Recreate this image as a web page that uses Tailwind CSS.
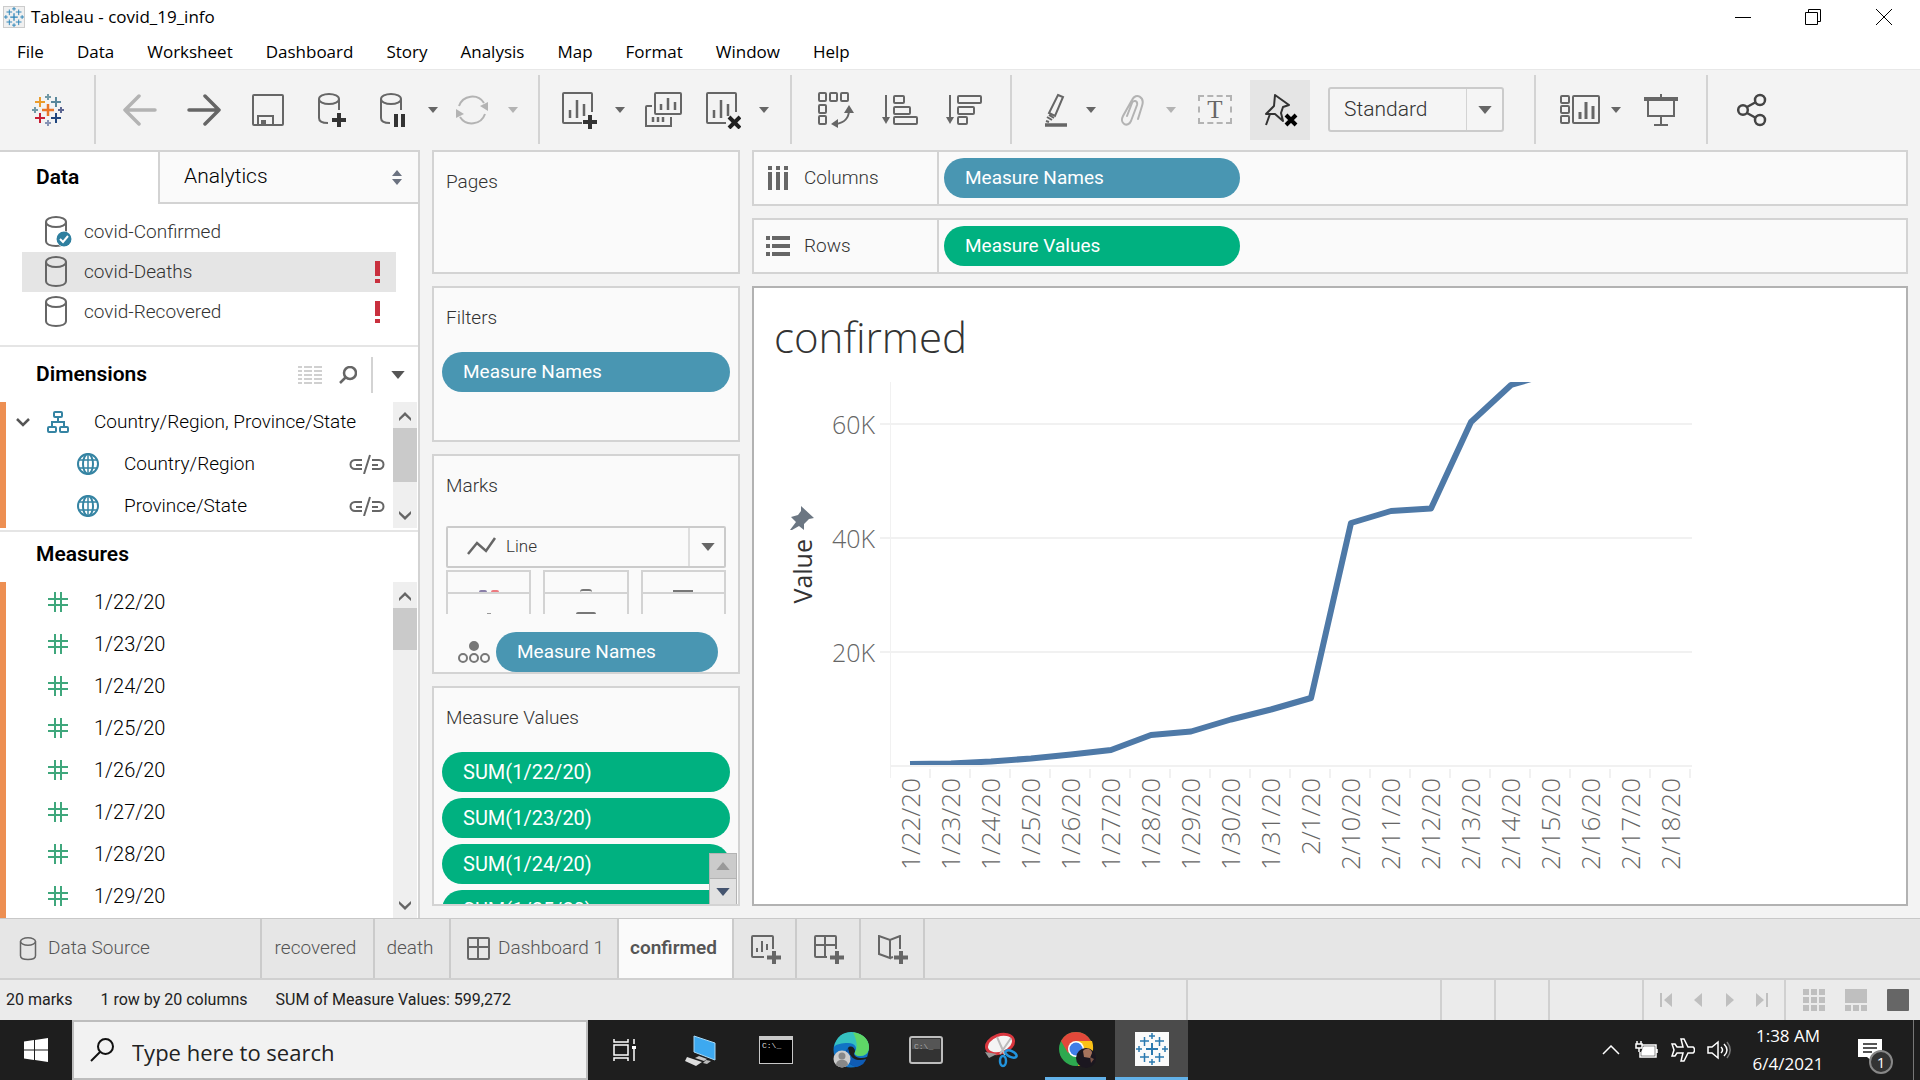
<!DOCTYPE html>
<html lang="en">
<head>
<meta charset="utf-8">
<meta name="viewport" content="width=device-width, initial-scale=1">
<title>Tableau - covid_19_info</title>
<script src="https://cdn.jsdelivr.net/npm/@tailwindcss/browser@4"></script>
</head>
<body class="h-screen min-h-[1080px] w-full flex flex-col overflow-hidden bg-white text-[19px] text-[#333] font-[Roboto,'Liberation_Sans',sans-serif]">

<!-- Shared icon symbols -->
<svg class="hidden" aria-hidden="true">
  <symbol id="db" viewBox="0 0 24 32"><g fill="none" stroke="#666" stroke-width="2"><ellipse cx="12" cy="6" rx="10" ry="5"/><path d="M2 6v19c0 3 4 5 10 5s10-2 10-5V6"/></g></symbol>
  <symbol id="caret" viewBox="0 0 10 6"><path d="M0 0h10L5 6z" fill="currentColor"/></symbol>
  <symbol id="up" viewBox="0 0 12 10"><path d="M0 9V6l6-6 6 6v3L6 3.500z" fill="#666"/></symbol>
  <symbol id="down" viewBox="0 0 12 10"><path d="M0 1v3l6 6 6-6V1L6 6.500z" fill="#666"/></symbol>
  <symbol id="hash" viewBox="0 0 20 20"><path d="M7 0v20M13 0v20M0 7h20M0 13h20" stroke="#3fa77c" stroke-width="2" fill="none"/></symbol>
  <symbol id="globe" viewBox="0 0 24 24"><g fill="none" stroke="#3584a3" stroke-width="2"><circle cx="12" cy="12" r="10"/><ellipse cx="12" cy="12" rx="5" ry="10"/><path d="M3 8h18M3 16h18M12 2v20" stroke-width="1.500"/></g></symbol>
  <symbol id="link" viewBox="0 0 36 20"><g fill="none" stroke="#666" stroke-width="2"><path d="M13 6H6a4.500 4.500 0 0 0 0 9h7M7 11h6M23 6h7a4.500 4.500 0 0 1 0 9h-7M23 11h6M21 1l-6 19"/></g></symbol>
  <symbol id="chart" viewBox="0 0 36 38"><g fill="none" stroke="#666" stroke-width="2"><path d="M21 32H3a1 1 0 0 1-1-1V3a1 1 0 0 1 1-1h27a1 1 0 0 1 1 1v18"/><path d="M9 27v-8M16 27V9M23 25V13" stroke-width="2.500"/></g></symbol>
  <symbol id="marks" viewBox="0 0 32 32"><g fill="none" stroke-width="2"><path d="M10 16h12M16 10v12" /><path d="M4 8h9M8.500 4v9M19 8h9M23.500 4v9M4 24h9M8.500 20v9M19 24h9M23.500 20v9M13 3h6M16 0v6M13 29h6M16 26v6M0 16h6M3 13v6M26 16h6M29 13v6" stroke-width="1.500"/></g></symbol>
</svg>

<!-- Title bar -->
<header class="h-[34px] shrink-0 flex items-center justify-between font-['Open_Sans','Noto_Sans',sans-serif] text-black">
  <div class="flex items-center pl-[3px] gap-[6px]">
    <svg class="size-[22px] bg-[#f0f0f0] border border-[#ccc]" stroke="#2a83b8"><use href="#marks"/></svg>
    <h1 class="text-[17px]">Tableau - covid_19_info</h1>
  </div>
  <div class="flex">
    <button aria-label="Minimize" class="w-[70px] h-[34px] grid place-items-center"><svg class="w-4 h-4" stroke="#000"><path d="M0 8.500h16"/></svg></button>
    <button aria-label="Restore" class="w-[70px] h-[34px] grid place-items-center"><svg class="w-4 h-4" stroke="#000" fill="none"><path d="M.5 3.500h12v12H.5zM3.500 3V.5h12v12H13"/></svg></button>
    <button aria-label="Close" class="w-[72px] h-[34px] grid place-items-center"><svg class="w-4 h-4" stroke="#000"><path d="M0 0l16 16M16 0L0 16"/></svg></button>
  </div>
</header>

<!-- Menu bar -->
<nav class="h-[35px] shrink-0 flex gap-[33px] pl-[17px] items-center font-['Open_Sans','Noto_Sans',sans-serif] text-[17px] text-black">
  <a href="#">File</a><a href="#">Data</a><a href="#">Worksheet</a><a href="#">Dashboard</a><a href="#">Story</a><a href="#">Analysis</a><a href="#">Map</a><a href="#">Format</a><a href="#">Window</a><a href="#">Help</a>
</nav>

<!-- Toolbar -->
<div class="h-[81px] shrink-0 flex bg-[#f3f3f3] border-t border-[#e8e8e8] pt-[5px] pb-[6px] text-[#666]">
  <button aria-label="Start page" class="w-[94px] pl-[2px] grid place-items-center">
    <svg class="size-8" viewBox="0 0 32 32" fill="none" stroke-width="2"><path d="M10 16h12M16 10v12" stroke="#e97627" stroke-width="2.500"/><path d="M3 8h10M8 3v10" stroke="#eb9c2b"/><path d="M19 8h10M24 3v10" stroke="#59879b"/><path d="M3 24h10M8 19v10" stroke="#c72035"/><path d="M19 24h10M24 19v10" stroke="#1f457e"/><path d="M13 3h6M16 0v6M0 16h6M3 13v6" stroke="#7199a6"/><path d="M26 16h6M29 13v6" stroke="#5b6591"/><path d="M13 29h6M16 26v6" stroke="#8693b5"/></svg>
  </button>
  <div class="flex border-l-2 border-[#d3d3d3] pl-3 pr-[10px]">
    <button aria-label="Undo" class="w-16 grid place-items-center"><svg class="w-[34px] h-8" viewBox="0 0 34 32" fill="none" stroke="#b3b3b3" stroke-width="3.500" stroke-linecap="round" stroke-linejoin="round"><path d="M32 16H2M16 2L2 16l14 14"/></svg></button>
    <button aria-label="Redo" class="w-16 grid place-items-center"><svg class="w-[34px] h-8" viewBox="0 0 34 32" fill="none" stroke="#666" stroke-width="3.500" stroke-linecap="round" stroke-linejoin="round"><path d="M2 16h30M18 2l14 14-14 14"/></svg></button>
    <button aria-label="Save" class="w-16 grid place-items-center"><svg class="size-8" viewBox="0 0 32 32" fill="none" stroke="#666" stroke-width="2"><rect x="1" y="1" width="30" height="30" rx="1"/><path d="M6 31v-9h15v9"/><path d="M9 26h5v5H9z" fill="#666" stroke="none"/></svg></button>
    <button aria-label="New data source" class="w-16 grid place-items-center"><svg class="w-[30px] h-9" viewBox="0 0 30 36" fill="none" stroke="#666" stroke-width="2"><ellipse cx="12" cy="7" rx="10" ry="5"/><path d="M2 7v19c0 3 3 5 9 5M22 7v11"/><path d="M22 21v14M15 28h14" stroke="#333" stroke-width="4"/></svg></button>
    <button aria-label="Pause auto updates" class="w-[56px] grid place-items-center"><svg class="w-[26px] h-9" viewBox="0 0 26 36" fill="none" stroke="#666" stroke-width="2"><ellipse cx="12" cy="7" rx="10" ry="5"/><path d="M2 7v19c0 3 3 5 9 5M22 7v11"/><path d="M17 22v13M24 22v13" stroke="#333" stroke-width="4"/></svg></button>
    <button aria-label="Auto update options" class="w-[26px] grid place-items-center"><svg class="w-[10px] h-[6px]"><use href="#caret"/></svg></button>
    <button aria-label="Run update" class="w-[52px] grid place-items-center"><svg class="w-[34px] h-8" viewBox="0 0 34 32" fill="none" stroke="#b3b3b3" stroke-width="2"><path d="M4 12A14 14 0 0 1 29 9M30 20A14 14 0 0 1 5 23"/><path d="M33 8v9l-8-5zM1 24v-9l8 5z" fill="#b3b3b3" stroke="none"/></svg></button>
    <button aria-label="Update options" class="w-[30px] grid place-items-center text-[#b3b3b3]"><svg class="w-[10px] h-[6px]"><use href="#caret"/></svg></button>
  </div>
  <div class="flex border-l-2 border-[#d3d3d3] pl-[7px] pr-[11px]">
    <button aria-label="New worksheet" class="w-16 grid place-items-center"><svg class="w-9 h-[38px]" viewBox="0 0 36 38"><use href="#chart"/><path d="M29 24v14M22 31h14" stroke="#333" stroke-width="4"/></svg></button>
    <button aria-label="New worksheet options" class="w-[18px] grid place-items-center"><svg class="w-[10px] h-[6px]"><use href="#caret"/></svg></button>
    <button aria-label="Duplicate" class="w-[68px] grid place-items-center"><svg class="w-[38px] h-9" viewBox="0 0 38 36" fill="none" stroke="#666" stroke-width="2"><rect x="11" y="1" width="26" height="21" rx="1"/><path d="M8 14H3a1 1 0 0 0-1 1v19h25v-9"/><path d="M17 18v-6M24 18V6M31 18v-8M9 30v-5M14 30v-5M19 30v-5" stroke-width="2.500"/></svg></button>
    <button aria-label="Clear sheet" class="w-[52px] grid place-items-center"><svg class="w-9 h-[38px]" viewBox="0 0 36 38"><use href="#chart"/><path d="M24 26l11 11M35 26L24 37" stroke="#222" stroke-width="4"/></svg></button>
    <button aria-label="Clear options" class="w-[30px] grid place-items-center"><svg class="w-[10px] h-[6px]"><use href="#caret"/></svg></button>
  </div>
  <div class="flex border-l-2 border-[#d3d3d3] pl-3 pr-[14px]">
    <button aria-label="Swap rows and columns" class="w-16 grid place-items-center"><svg class="w-9 h-[36px]" viewBox="0 0 36 36" fill="none" stroke="#666" stroke-width="2"><rect x="1" y="1" width="7" height="8" rx="1"/><rect x="12" y="1" width="7" height="8" rx="1"/><rect x="23" y="1" width="7" height="8" rx="1"/><rect x="1" y="13" width="7" height="8" rx="1"/><rect x="1" y="24" width="7" height="8" rx="1"/><path d="M31 18c0 8-5 13-13 14"/><path d="M31 13l5 8h-10zM13 32l7-5v9z" fill="#666" stroke="none"/></svg></button>
    <button aria-label="Sort ascending" class="w-16 grid place-items-center"><svg class="w-9 h-[30px]" viewBox="0 0 36 30" fill="none" stroke="#666" stroke-width="2"><path d="M4 0v25"/><path d="M0 22h8l-4 7z" fill="#666" stroke="none"/><rect x="12" y="1" width="10" height="7" rx="1"/><rect x="12" y="12" width="16" height="7" rx="1"/><rect x="12" y="22" width="23" height="7" rx="1"/></svg></button>
    <button aria-label="Sort descending" class="w-16 grid place-items-center"><svg class="w-9 h-[30px]" viewBox="0 0 36 30" fill="none" stroke="#666" stroke-width="2"><path d="M4 0v25"/><path d="M0 22h8l-4 7z" fill="#666" stroke="none"/><rect x="12" y="1" width="23" height="7" rx="1"/><rect x="12" y="12" width="16" height="7" rx="1"/><rect x="12" y="22" width="9" height="7" rx="1"/></svg></button>
  </div>
  <div class="flex items-stretch border-l-2 border-[#d3d3d3] pl-5 pr-[30px]">
    <button aria-label="Highlight" class="w-12 grid place-items-center"><svg class="w-6 h-[34px]" viewBox="0 0 24 34" fill="none" stroke="#666" stroke-width="2"><path d="M14 2l5 2-8 19-6-3zM5 22l5 3M3 24l5 3M2 28l3 1"/><path d="M1 32h22" stroke-width="3.500"/></svg></button>
    <button aria-label="Highlight options" class="w-[22px] grid place-items-center"><svg class="w-[10px] h-[6px]"><use href="#caret"/></svg></button>
    <button aria-label="Group members" class="w-[60px] grid place-items-center"><svg class="w-6 h-8" viewBox="0 0 24 32" fill="none" stroke="#b3b3b3" stroke-width="2" stroke-linecap="round"><path d="M18 25l4-13c3-9-6-14-10-6L3 22c-4 8 5 12 8 5l6-16c1-5-4-5-5-2L7 22"/></svg></button>
    <button aria-label="Group options" class="w-[18px] grid place-items-center text-[#b3b3b3]"><svg class="w-[10px] h-[6px]"><use href="#caret"/></svg></button>
    <button aria-label="Show mark labels" class="w-[70px] grid place-items-center"><span class="w-[34px] h-[29px] grid place-items-center border-2 border-dashed border-[#b3b3b3] font-['Liberation_Serif',serif] text-[25px] leading-none">T</span></button>
    <button aria-label="Fix axes" class="w-[60px] h-[60px] self-center grid place-items-center bg-[#e5e5e5]"><svg class="w-[36px] h-[34px]" viewBox="0 0 36 34" fill="none" stroke="#333" stroke-width="2" stroke-linejoin="round"><path d="M13 2l14 10-6 2-2 6 2 8-8-7H4l8-8zM8 21L4 32"/><path d="M24 22l10 10M34 22L24 32" stroke="#000" stroke-width="4"/></svg></button>
    <div class="relative ml-[18px] w-[176px] h-[45px] self-center">
      <select id="fit" aria-label="Fit" class="appearance-none w-full h-full rounded-[3px] border-2 border-[#cbcbcb] bg-[#f5f5f5] pl-[14px] text-[21px] font-light text-[#333]"><option>Standard</option></select>
      <span class="pointer-events-none absolute right-[1px] top-0.5 bottom-0.5 w-[37px] border-l border-[#d3d3d3] grid place-items-center"><svg class="w-[14px] h-[8px]"><use href="#caret"/></svg></span>
    </div>
  </div>
  <div class="flex border-l-2 border-[#d3d3d3] pl-4 pr-2">
    <button aria-label="Show or hide cards" class="w-[56px] grid place-items-center"><svg class="w-10 h-[30px]" viewBox="0 0 40 30" fill="none" stroke="#666" stroke-width="2"><rect x="1" y="1" width="8" height="7" rx="1"/><rect x="1" y="11" width="8" height="7" rx="1"/><rect x="1" y="21" width="8" height="7" rx="1"/><rect x="13" y="1" width="26" height="27" rx="1"/><path d="M20 24v-7M26 24V7M33 24V11" stroke-width="3"/></svg></button>
    <button aria-label="Card options" class="w-4 grid place-items-center"><svg class="w-[10px] h-[6px]"><use href="#caret"/></svg></button>
    <button aria-label="Presentation mode" class="w-[74px] grid place-items-center"><svg class="w-[34px] h-8" viewBox="0 0 34 32" fill="none" stroke="#666" stroke-width="2"><path d="M17 0v4M4 6v16h26V6M17 22v8"/><path d="M0 5h34" stroke-width="4"/><path d="M10 31h14"/></svg></button>
  </div>
  <div class="flex border-l-2 border-[#d3d3d3] pl-3">
    <button aria-label="Share" class="w-16 grid place-items-center"><svg class="w-[30px] h-[34px]" viewBox="0 0 30 34" fill="none" stroke="#444" stroke-width="2.500"><circle cx="6" cy="17" r="4.800"/><circle cx="23" cy="7" r="5"/><circle cx="23" cy="27" r="5"/><path d="M10 14l9-5M10 20l9 5"/></svg></button>
  </div>
</div>

<!-- Workspace -->
<main class="flex-1 min-h-0 flex bg-[#f3f3f3]">

  <!-- Data pane -->
  <aside class="w-[420px] shrink-0 flex flex-col bg-white border-r-2 border-t-2 border-[#d3d3d3]">
    <div class="h-[52px] shrink-0 flex text-[21px]">
      <button class="w-[158px] text-left pl-9 font-semibold text-black">Data</button>
      <button class="flex-1 flex items-center justify-between bg-[#fafafa] border-l-2 border-b-2 border-[#d3d3d3] pl-6 pr-4 font-light text-black">Analytics
        <svg class="w-[10px] h-[15px]" viewBox="0 0 10 15" fill="#6b7280"><path d="M0 6l5-6 5 6zM0 9l5 6 5-6z"/></svg></button>
    </div>
    <ul class="h-[143px] shrink-0 pt-2 pl-[22px] pr-[22px] border-b-2 border-[#e5e5e5] font-light">
      <li class="h-10 flex items-center pl-[22px] gap-4">
        <span class="relative"><svg class="w-6 h-8"><use href="#db"/></svg><svg class="absolute left-[12px] top-[15px] size-4 bg-white rounded-full" viewBox="0 0 16 16"><circle cx="8" cy="8" r="7.500" fill="#2e7f9f"/><path d="M4 8l3 3 5-6" fill="none" stroke="#fff" stroke-width="2"/></svg></span>
        covid-Confirmed</li>
      <li class="h-10 flex items-center pl-[22px] pr-4 gap-4 bg-[#e5e5e5]"><svg class="w-6 h-8"><use href="#db"/></svg>covid-Deaths
        <svg class="ml-auto w-[5px] h-[22px]" fill="#c9303e"><path d="M0 0h5v15H0zM0 18h5v4H0z"/></svg></li>
      <li class="h-10 flex items-center pl-[22px] pr-4 gap-4"><svg class="w-6 h-8"><use href="#db"/></svg>covid-Recovered
        <svg class="ml-auto w-[5px] h-[22px]" fill="#c9303e"><path d="M0 0h5v15H0zM0 18h5v4H0z"/></svg></li>
    </ul>
    <div class="h-[55px] shrink-0 flex items-center pl-9 pr-[13px]">
      <h2 class="font-semibold text-[21px] text-black">Dimensions</h2>
      <div class="ml-auto flex items-center">
        <button aria-label="View data"><svg class="w-6 h-[18px]" stroke="#d0d0d0" stroke-width="2" stroke-dasharray="4 2 8 2 8 9"><path d="M0 1h24M0 5h24M0 9h24M0 13h24M0 17h24"/></svg></button>
        <button aria-label="Find field" class="ml-[17px]"><svg class="w-[18px] h-[18px]" fill="none" stroke="#666" stroke-width="2.500"><circle cx="11" cy="7" r="6"/><path d="M7 11l-6 6"/></svg></button>
        <button aria-label="Field options" class="ml-[14px] h-9 border-l-2 border-[#d3d3d3] pl-[18px] text-[#555]"><svg class="w-[14px] h-2"><use href="#caret"/></svg></button>
      </div>
    </div>
    <div class="h-[126px] shrink-0 flex border-l-[6px] border-[#ed8f52] pr-px">
      <ul class="flex-1 font-light text-black">
        <li class="h-[42px] flex items-center pl-[10px] pb-[2px]"><svg class="w-[14px] h-[10px]" fill="none" stroke="#555" stroke-width="2.500"><path d="M1 2l6 6 6-6"/></svg>
          <svg class="ml-[17px] w-[22px] h-[22px]" fill="none" stroke="#3584a3" stroke-width="2"><rect x="7" y="1" width="8" height="5" rx="1"/><rect x="1" y="16" width="8" height="5" rx="1"/><rect x="13" y="16" width="8" height="5" rx="1"/><path d="M11 6v5M5 16v-5h12v5"/></svg>
          <span class="ml-[25px]">Country/Region, Province/State</span></li>
        <li class="h-[42px] flex items-center pl-[70px] pr-2 pb-[2px]"><svg class="w-6 h-6"><use href="#globe"/></svg><span class="ml-6">Country/Region</span><svg class="ml-auto w-9 h-5"><use href="#link"/></svg></li>
        <li class="h-[42px] flex items-center pl-[70px] pr-2 pb-[2px]"><svg class="w-6 h-6"><use href="#globe"/></svg><span class="ml-6">Province/State</span><svg class="ml-auto w-9 h-5"><use href="#link"/></svg></li>
      </ul>
      <div class="w-6 bg-[#efefef] flex flex-col items-center pt-2 pb-2"><svg class="w-3 h-[10px] shrink-0 mt-[2px]"><use href="#up"/></svg><div class="mt-[6px] w-full h-[54px] bg-[#cacaca]"></div><svg class="mt-auto w-3 h-[10px] shrink-0"><use href="#down"/></svg></div>
    </div>
    <div class="mt-[2px] h-[52px] shrink-0 flex items-center pl-9 pb-1 border-t-2 border-[#e5e5e5]"><h2 class="font-semibold text-[21px] text-black">Measures</h2></div>
    <div class="flex-1 min-h-0 flex border-l-[6px] border-[#ed8f52] pr-px overflow-hidden">
      <ul class="flex-1 font-light text-[20px] text-black">
        <li class="h-[42px] flex items-center pl-[42px] pb-[2px] gap-[26px]"><svg class="size-5"><use href="#hash"/></svg>1/22/20</li>
        <li class="h-[42px] flex items-center pl-[42px] pb-[2px] gap-[26px]"><svg class="size-5"><use href="#hash"/></svg>1/23/20</li>
        <li class="h-[42px] flex items-center pl-[42px] pb-[2px] gap-[26px]"><svg class="size-5"><use href="#hash"/></svg>1/24/20</li>
        <li class="h-[42px] flex items-center pl-[42px] pb-[2px] gap-[26px]"><svg class="size-5"><use href="#hash"/></svg>1/25/20</li>
        <li class="h-[42px] flex items-center pl-[42px] pb-[2px] gap-[26px]"><svg class="size-5"><use href="#hash"/></svg>1/26/20</li>
        <li class="h-[42px] flex items-center pl-[42px] pb-[2px] gap-[26px]"><svg class="size-5"><use href="#hash"/></svg>1/27/20</li>
        <li class="h-[42px] flex items-center pl-[42px] pb-[2px] gap-[26px]"><svg class="size-5"><use href="#hash"/></svg>1/28/20</li>
        <li class="h-[42px] flex items-center pl-[42px] pb-[2px] gap-[26px]"><svg class="size-5"><use href="#hash"/></svg>1/29/20</li>
      </ul>
      <div class="w-6 bg-[#efefef] flex flex-col items-center pt-2 pb-2"><svg class="w-3 h-[10px] shrink-0 mt-[2px]"><use href="#up"/></svg><div class="mt-[6px] w-full h-[42px] bg-[#cacaca]"></div><svg class="mt-auto w-3 h-[10px] shrink-0"><use href="#down"/></svg></div>
    </div>
  </aside>

  <!-- Cards -->
  <section class="w-[308px] shrink-0 ml-3 mb-3 flex flex-col gap-3 font-light">
    <div class="h-[124px] shrink-0 border-2 border-[#d3d3d3] bg-[#fafafa] pt-4 pl-3"><h3 class="leading-[28px]">Pages</h3></div>
    <div class="h-[156px] shrink-0 border-2 border-[#d3d3d3] bg-[#fafafa] pt-4 px-2">
      <h3 class="leading-[28px] pl-1">Filters</h3>
      <button class="mt-5 w-full h-10 rounded-full bg-[#4996b2] text-white font-normal text-left pl-[21px]">Measure Names</button>
    </div>
    <div class="h-[220px] shrink-0 border-2 border-[#d3d3d3] bg-[#fafafa] pt-4 px-3 flex flex-col">
      <h3 class="leading-[28px]">Marks</h3>
      <div class="relative mt-[26px] h-[42px]">
        <select id="mark" aria-label="Mark type" class="appearance-none w-full h-full rounded-[2px] border-2 border-[#cbcbcb] bg-[#fafafa] pl-[58px] text-[17px]"><option>Line</option></select>
        <svg class="pointer-events-none absolute left-[21px] top-[11px] w-[30px] h-[18px]" fill="none" stroke="#666" stroke-width="2.500"><path d="M1 17l9-11 9 8L28 1"/></svg>
        <span class="pointer-events-none absolute right-0 top-0.5 bottom-0.5 w-[38px] border-l-2 border-[#dedede] grid place-items-center text-[#666]"><svg class="w-[14px] h-2"><use href="#caret"/></svg></span>
      </div>
      <div class="mt-0.5 grid grid-cols-3 gap-x-3">
        <button aria-label="Color" class="h-[22px] border-2 border-b-0 border-[#d3d3d3] flex justify-center items-end gap-1"><span class="w-2 h-[2px] rounded-t-full bg-[#8a7fa8]"></span><span class="w-2 h-[2px] rounded-t-full bg-[#ed7a80]"></span></button>
        <button aria-label="Size" class="h-[22px] border-2 border-b-0 border-[#d3d3d3] flex justify-center items-end"><span class="w-3 h-[3px] rounded-t-full border-t-2 border-[#777]"></span></button>
        <button aria-label="Label" class="h-[22px] border-2 border-b-0 border-[#d3d3d3] flex justify-center items-end"><span class="w-5 h-[2px] bg-[#777]"></span></button>
        <button aria-label="Detail" class="h-[22px] border-2 border-b-0 border-[#d3d3d3] flex justify-center items-end"><span class="w-1 h-px bg-[#999]"></span></button>
        <button aria-label="Tooltip" class="h-[22px] border-2 border-b-0 border-[#d3d3d3] flex justify-center items-end"><span class="w-5 h-[2px] rounded-t-sm bg-[#777]"></span></button>
        <button aria-label="Path" class="h-[22px] border-2 border-b-0 border-[#d3d3d3]"></button>
      </div>
      <div class="mt-auto flex items-center pl-3 pr-2">
        <svg class="w-8 h-6" fill="none" stroke="#777" stroke-width="2"><circle cx="16" cy="6" r="4" fill="#777"/><circle cx="5" cy="18" r="4"/><circle cx="16" cy="18" r="4"/><circle cx="27" cy="18" r="4"/></svg>
        <button class="ml-[6px] flex-1 h-10 rounded-full bg-[#4996b2] text-white font-normal text-left pl-[21px]">Measure Names</button>
      </div>
    </div>
    <div class="relative flex-1 min-h-0 border-2 border-[#d3d3d3] bg-[#fafafa] pt-4 px-2 overflow-hidden">
      <h3 class="leading-[28px] pl-1">Measure Values</h3>
      <div class="mt-5 flex flex-col gap-[6px] text-[20px] text-white font-normal">
        <button class="h-10 shrink-0 rounded-full bg-[#00b180] text-left pl-[21px]">SUM(1/22/20)</button>
        <button class="h-10 shrink-0 rounded-full bg-[#00b180] text-left pl-[21px]">SUM(1/23/20)</button>
        <button class="h-10 shrink-0 rounded-full bg-[#00b180] text-left pl-[21px]">SUM(1/24/20)</button>
        <button class="h-10 shrink-0 rounded-full bg-[#00b180] text-left pl-[21px]">SUM(1/25/20)</button>
      </div>
      <div class="absolute right-[1px] bottom-0 w-7 border border-[#b3b3b3] border-b-0">
        <button aria-label="Scroll up" class="w-full h-6 bg-[#cbcbcb] grid place-items-center text-[#999]"><svg class="w-[14px] h-2 rotate-180"><use href="#caret"/></svg></button>
        <button aria-label="Scroll down" class="w-full h-[26px] bg-[#e1e1e1] border-t border-[#b3b3b3] grid place-items-center text-[#44546f]"><svg class="w-[14px] h-2"><use href="#caret"/></svg></button>
      </div>
    </div>
  </section>

  <!-- Shelves and view -->
  <section class="flex-1 min-w-0 ml-3 mr-3 mb-3 flex flex-col gap-3">
    <div class="h-14 shrink-0 flex border-2 border-[#d3d3d3] bg-[#fafafa]">
      <h3 class="w-[185px] border-r-2 border-[#d3d3d3] flex items-center pl-[14px] gap-[14px] font-light"><svg class="w-[22px] h-6" fill="#666"><path d="M0 0h4v4H0zM8 0h4v4H8zM16 0h4v4h-4zM0 6h4v18H0zM8 6h4v18H8zM16 6h4v18h-4z"/></svg>Columns</h3>
      <button class="ml-[5px] mt-[6px] w-[296px] h-10 rounded-full bg-[#4996b2] text-white text-left pl-[21px]">Measure Names</button>
    </div>
    <div class="h-14 shrink-0 flex border-2 border-[#d3d3d3] bg-[#fafafa]">
      <h3 class="w-[185px] border-r-2 border-[#d3d3d3] flex items-center pl-3 gap-[14px] font-light"><svg class="w-6 h-5" fill="#666"><path d="M0 0h4v4H0zM6 0h18v4H6zM0 8h4v4H0zM6 8h18v4H6zM0 16h4v4H0zM6 16h18v4H6z"/></svg>Rows</h3>
      <button class="ml-[5px] mt-[6px] w-[296px] h-10 rounded-full bg-[#00b180] text-white text-left pl-[21px]">Measure Values</button>
    </div>
    <article class="flex-1 min-h-0 bg-white border-2 border-[#b2b2b2] overflow-hidden font-['Open_Sans','Noto_Sans',sans-serif]">
      <h2 class="pl-5 pt-[22px] h-[94px] text-[42px] leading-[54px] font-light text-[#333]">confirmed</h2>
      <div class="flex">
        <div class="w-[60px] h-[384px] flex flex-col items-center pt-[124px] pl-[36px] shrink-0">
          <svg class="w-6 h-6 shrink-0" viewBox="0 0 24 24" fill="#6b7682"><path d="M11 0l13 12-5 1-5 5 0 6-5-4-7 4-2 0 6-8-5-5 7-2 3-4z"/></svg>
          <div class="mt-[9px] [writing-mode:vertical-rl] rotate-180 text-[25px] leading-6 font-medium text-[#333]">Value</div>
        </div>
        <div class="w-[61px] mr-px h-[384px] shrink-0 text-right text-[25px] leading-[30px] font-light text-[#666] pt-[27px] flex flex-col gap-[84px]"><span>60K</span><span>40K</span><span>20K</span></div>
        <div class="w-[816px] shrink-0">
          <svg class="block w-full h-[396px]" viewBox="0 0 816 396" fill="none">
            <path d="M4 42h812M4 156h812M4 270h812M14 384h802" stroke="#f1f1f1" stroke-width="2"/>
            <path d="M14.500 0v396" stroke="#f1f1f1"/>
            <path d="M54 387v9M94 387v9M134 387v9M174 387v9M214 387v9M254 387v9M294 387v9M334 387v9M374 387v9M414 387v9M454 387v9M494 387v9M534 387v9M574 387v9M614 387v9M654 387v9M694 387v9M734 387v9M774 387v9M814 387v9" stroke="#f1f1f1" stroke-width="2"/>
            <svg x="0" y="0" width="816" height="383" viewBox="0 0 816 383"><path d="M34 382l41-.5 40-2 40-3 40-4 40-4.500 40-15 40-3.500 40-12 40-10 40-11.500L475 141l40-12 40-2.500L595 40l40-37 40-12" stroke="#4e79a7" stroke-width="6" stroke-linejoin="round"/></svg>
          </svg>
          <div class="ml-[14px] w-[800px] grid grid-cols-20 justify-items-center text-[26px] leading-[30px] font-light text-[#666]">
            <span class="[writing-mode:vertical-rl] rotate-180 text-right">1/22/20</span><span class="[writing-mode:vertical-rl] rotate-180 text-right">1/23/20</span><span class="[writing-mode:vertical-rl] rotate-180 text-right">1/24/20</span><span class="[writing-mode:vertical-rl] rotate-180 text-right">1/25/20</span><span class="[writing-mode:vertical-rl] rotate-180 text-right">1/26/20</span><span class="[writing-mode:vertical-rl] rotate-180 text-right">1/27/20</span><span class="[writing-mode:vertical-rl] rotate-180 text-right">1/28/20</span><span class="[writing-mode:vertical-rl] rotate-180 text-right">1/29/20</span><span class="[writing-mode:vertical-rl] rotate-180 text-right">1/30/20</span><span class="[writing-mode:vertical-rl] rotate-180 text-right">1/31/20</span><span class="[writing-mode:vertical-rl] rotate-180 text-right">2/1/20</span><span class="[writing-mode:vertical-rl] rotate-180 text-right">2/10/20</span><span class="[writing-mode:vertical-rl] rotate-180 text-right">2/11/20</span><span class="[writing-mode:vertical-rl] rotate-180 text-right">2/12/20</span><span class="[writing-mode:vertical-rl] rotate-180 text-right">2/13/20</span><span class="[writing-mode:vertical-rl] rotate-180 text-right">2/14/20</span><span class="[writing-mode:vertical-rl] rotate-180 text-right">2/15/20</span><span class="[writing-mode:vertical-rl] rotate-180 text-right">2/16/20</span><span class="[writing-mode:vertical-rl] rotate-180 text-right">2/17/20</span><span class="[writing-mode:vertical-rl] rotate-180 text-right">2/18/20</span>
          </div>
        </div>
      </div>
    </article>
  </section>
</main>

<!-- Sheet tabs -->
<div class="h-[62px] shrink-0 flex bg-[#e6e6e6] border-t border-b-2 border-t-[#c8c8c8] border-b-[#d0d0d0] text-[19px] font-light text-[#555]">
  <button class="w-[262px] flex items-center gap-[10px] pl-[18px] border-r-2 border-[#cbcbcb]"><svg class="w-5 h-6"><use href="#db"/></svg>Data Source</button>
  <button class="w-[113px] pr-1 border-r-2 border-[#cbcbcb]">recovered</button>
  <button class="w-[76px] pr-1 border-r-2 border-[#cbcbcb]">death</button>
  <button class="w-[168px] flex items-center gap-[7px] pl-4 border-r-2 border-[#cbcbcb]"><svg class="w-6 h-6" fill="none" stroke="#666" stroke-width="2"><rect x="1" y="1" width="21" height="21" rx="1"/><path d="M11 1v21M1 10h21"/></svg>Dashboard 1</button>
  <button class="w-[115px] pr-1 border-r-2 border-[#cbcbcb] bg-[#fafafa] font-semibold">confirmed</button>
  <button aria-label="New worksheet" class="w-[63px] pl-[2px] pt-[2px] grid place-items-center border-r-2 border-[#cbcbcb]"><svg class="w-[30px] h-[30px]" fill="none" stroke="#666" stroke-width="2"><path d="M13 22H2a1 1 0 0 1-1-1V2a1 1 0 0 1 1-1h19a1 1 0 0 1 1 1v12M6 17v-4M11 17V6M16 15V9"/><path d="M23 16v13M16 22.500h14" stroke-width="4"/></svg></button>
  <button aria-label="New dashboard" class="w-16 pl-[2px] pt-[2px] grid place-items-center border-r-2 border-[#cbcbcb]"><svg class="w-[30px] h-[30px]" fill="none" stroke="#666" stroke-width="2"><path d="M13 22H2a1 1 0 0 1-1-1V2a1 1 0 0 1 1-1h19a1 1 0 0 1 1 1v12M11 1v21M1 10h21"/><path d="M23 16v13M16 22.500h14" stroke-width="4"/></svg></button>
  <button aria-label="New story" class="w-16 pl-[2px] pt-[2px] grid place-items-center border-r-2 border-[#cbcbcb]"><svg class="w-[30px] h-[30px]" fill="none" stroke="#666" stroke-width="2"><path d="M22 14V1l-10 4L1 1v18l11 4V5M12 23l3-1"/><path d="M23 16v13M16 22.500h14" stroke-width="4"/></svg></button>
</div>

<!-- Status bar -->
<div class="h-10 shrink-0 flex bg-[#ebebeb] text-[16px] text-[#222]">
  <p class="flex-1 flex items-center gap-7 pl-[6px] whitespace-nowrap"><span>20 marks</span><span>1 row by 20 columns</span><span>SUM of Measure Values: 599,272</span></p>
  <div class="w-[254px] border-l-2 border-[#d0d0d0]"></div>
  <div class="w-[54px] border-l-2 border-[#d0d0d0]"></div>
  <div class="w-[54px] border-l-2 border-[#d0d0d0]"></div>
  <div class="w-[94px] border-l-2 border-[#d0d0d0]"></div>
  <div class="w-[142px] border-l-2 border-[#d0d0d0] flex items-center justify-center gap-[18px]">
    <button aria-label="First"><svg class="w-[14px] h-[14px]" fill="#bfbfbf"><path d="M1 0h2v14H1zM13 0v14L5 7z"/></svg></button>
    <button aria-label="Previous"><svg class="w-[14px] h-[14px]" fill="#bfbfbf"><path d="M11 0v14L3 7z"/></svg></button>
    <button aria-label="Next"><svg class="w-[14px] h-[14px]" fill="#bfbfbf"><path d="M3 0v14l8-7z"/></svg></button>
    <button aria-label="Last"><svg class="w-[14px] h-[14px]" fill="#bfbfbf"><path d="M11 0h2v14h-2zM1 0v14l8-7z"/></svg></button>
  </div>
  <div class="w-[136px] border-l-2 border-[#d0d0d0] flex items-center gap-5 pl-[17px]">
    <button aria-label="Sheet sorter"><svg class="w-[22px] h-[22px]" fill="#bfbfbf"><path d="M0 0h6v6H0zM8 0h6v6H8zM16 0h6v6h-6zM0 8h6v6H0zM8 8h6v6H8zM16 8h6v6h-6zM0 16h6v6H0zM8 16h6v6H8zM16 16h6v6h-6z"/></svg></button>
    <button aria-label="Filmstrip"><svg class="w-[22px] h-[22px]" fill="#bfbfbf"><path d="M0 0h22v14H0zM0 16h6v6H0zM8 16h6v6H8zM16 16h6v6h-6z"/></svg></button>
    <button aria-label="Tabs" class="size-[22px] rounded-[1px] bg-[#666]"></button>
  </div>
</div>

<!-- Windows taskbar -->
<footer class="h-[60px] shrink-0 flex bg-[#1e1e1e] text-white font-['Open_Sans','Noto_Sans',sans-serif]">
  <button aria-label="Start" class="w-[72px] grid place-items-center"><svg class="size-6" fill="#fff"><path d="M0 3.500l10-1.500v9.500H0zM11 2l13-2v11.500H11zM0 12.500h10V22l-10-1.500zM11 12.500h13V24l-13-2z"/></svg></button>
  <div class="w-[516px] flex items-center bg-[#f2f2f2] border-2 border-[#bdbdbd] pl-4">
    <svg class="w-6 h-6 shrink-0" fill="none" stroke="#111" stroke-width="2"><circle cx="15.500" cy="8.500" r="7.500"/><path d="M10 14L1 23"/></svg>
    <input id="search" aria-label="Search" type="text" placeholder="Type here to search" class="ml-[18px] pt-1 flex-1 min-w-0 bg-transparent outline-none text-[22px] placeholder:text-[#222]">
  </div>
  <div class="flex">
    <button aria-label="Task view" class="w-[74px] grid place-items-center"><svg class="w-6 h-6" fill="none" stroke="#fff" stroke-width="1.500"><path d="M1 1v3h14V1M1 7h14v10H1zM1 23v-3h14v3M21 1v5M21 11v12"/><path d="M19 8h4v3h-4z" fill="#fff" stroke="none"/></svg></button>
    <button aria-label="Remote desktop" class="w-[77px] pl-[3px] grid place-items-center"><svg class="w-9 h-9" viewBox="0 0 36 36"><path d="M10 4l21 7v17L10 20z" fill="#3da9f0" stroke="#a8d8f5"/><path d="M15 24l8 3-3 2-9-3z" fill="#c8c8c8"/><path d="M3 25l15 5-6 4-11-5z" fill="#ddd"/><path d="M22 28l5 1-4 3-4-1z" fill="#bbb"/></svg></button>
    <button aria-label="Command prompt" class="w-[74px] grid place-items-center"><svg class="w-[34px] h-7" viewBox="0 0 34 28"><path d="M0 0h34v28H0z" fill="#c8c8c8"/><path d="M1 4h32v23H1z" fill="#000"/><text x="3" y="12" font-size="8" fill="#ddd" font-family="Liberation Mono">C:\_</text></svg></button>
    <button aria-label="Edge" class="w-[75px] grid place-items-center"><svg class="w-9 h-9" viewBox="0 0 36 36"><circle cx="18" cy="18" r="17.500" fill="#1173c5"/><path d="M1 15C3 5 10 0 18 0c10 0 18 7 18 15 0 6-4 9-9 9-4 0-6-2-5-4 3-4 0-9-7-9-6 0-12 1-14 4z" fill="#35c1c0"/><path d="M20 .5C30 1 36 8 36 15c0 6-4 9-9 9-4 0-6-2-5-4 3-4 2-12-2-19.500z" fill="#5fd667"/><path d="M15 16c-6 6-2 16 8 19 5-1 9-4 11-8-9 4-20 1-19-11z" fill="#0b4ea2"/><path d="M15 16c2-3 7-1 7 3 0 1-1 2-1 3 1 4 8 5 13 3l2 2-4 4c-9 0-16-6-17-15z" fill="#1e1e1e"/><path d="M15 17c-4 7 0 15 8 18 5-1 9-4 10-8-8 3-17 0-18-10z" fill="#0f5cb5"/><circle cx="9" cy="27" r="8.500" fill="#ccc"/><circle cx="9" cy="24" r="3.500" fill="#888"/><path d="M3 33c0-7 12-7 12 0a8.500 8.500 0 0 1-12 0z" fill="#888"/></svg></button>
    <button aria-label="Developer prompt" class="w-[75px] grid place-items-center"><svg class="w-[34px] h-7" viewBox="0 0 34 28"><rect x="1" y="1" width="32" height="26" rx="2" fill="#333" stroke="#bdbdbd" stroke-width="2"/><path d="M3 3h28v10H3z" fill="#555"/><text x="5" y="13" font-size="8" fill="#aaa" font-family="Liberation Mono">C:\_</text></svg></button>
    <button aria-label="Snip" class="w-[75px] grid place-items-center"><svg class="w-9 h-9" viewBox="0 0 36 36"><ellipse cx="17" cy="12" rx="14" ry="9" transform="rotate(-20 17 12)" fill="#f4f4f4" stroke="#d9363e" stroke-width="3"/><path d="M2 20l12 2-8 4z" fill="#999"/><path d="M14 5l8 18M28 6L17 22" stroke="#bbb" stroke-width="2"/><g fill="none" stroke="#2294dd" stroke-width="2.500"><ellipse cx="20" cy="29" rx="3" ry="5"/><ellipse cx="28" cy="22" rx="6" ry="3" transform="rotate(25 28 22)"/></g></svg></button>
    <button aria-label="Chrome" class="w-[75px] pl-1 relative grid place-items-center"><svg class="w-[38px] h-[38px]" viewBox="0 0 38 38"><circle cx="17" cy="18" r="17" fill="#2da94f"/><path d="M17 10h16c4 12-3 24-14 25l7-15z" fill="#fbc116"/><path d="M2 10a17 17 0 0 1 30 0H17l-8 12z" fill="#e2483a"/><circle cx="17" cy="18" r="8" fill="#fff"/><circle cx="17" cy="18" r="6.500" fill="#3f7ee8"/><circle cx="27" cy="27" r="10" fill="#1b1720"/><path d="M24 20c3-4 9-2 9 2l-2 5-6-1z" fill="#a5735c"/><path d="M31 26l4 2-3 4z" fill="#7a5347"/></svg><span class="absolute bottom-0 left-[7px] w-[61px] h-[3px] bg-[#62b1e8]"></span></button>
    <button aria-label="Tableau" class="ml-[2px] w-[73px] bg-[#4b4b4b] border-b-[3px] border-[#62b1e8] grid place-items-center"><span class="w-[34px] h-[34px] bg-[#fafafa] grid place-items-center"><svg class="size-8" stroke="#2a79b0"><use href="#marks"/></svg></span></button>
  </div>
  <div class="ml-auto flex items-center">
    <button aria-label="Hidden icons"><svg class="w-[18px] h-[10px]" fill="none" stroke="#fff" stroke-width="1.500"><path d="M1 9l8-8 8 8"/></svg></button>
    <svg class="ml-[15px] w-6 h-5" fill="none" stroke="#fff" stroke-width="1.500"><path d="M7 5h14v12H5v-5M22 9v4M1 4h6v4H1zM2 1v3M6 1v3M4 8v4"/><path d="M9 7h10v8H7v-3z" fill="#fff"/></svg>
    <svg class="ml-3 w-6 h-6" fill="none" stroke="#fff" stroke-width="1.500" viewBox="0 0 24 24"><path d="M10 1h3l4 8h5c2 1 2 5 0 6h-5l-4 8h-3l2-8H6l-2 3H1l2-6-2-6h3l2 3h6z"/></svg>
    <svg class="ml-3 w-6 h-5" fill="none" stroke="#fff" stroke-width="1.500"><path d="M1 7h4l6-5v16l-6-5H1zM14 7c2 2 2 4 0 6"/><path d="M17 4c4 4 4 8 0 12" /><path d="M20 2c4 5 4 11 0 16" stroke="#777"/></svg>
    <div class="ml-[18px] w-[78px] text-center text-[17px] leading-[28px]">1:38 AM<br>6/4/2021</div>
    <button aria-label="Notifications" class="relative ml-[31px] w-6"><svg class="w-6 h-6" fill="#fff"><path d="M0 1h24v18h-9v5l-6-5H0z"/><path d="M5 6h14M5 10h14M5 14h9" stroke="#1e1e1e" stroke-width="1.500"/></svg><span class="absolute left-[11px] top-[12px] size-6 rounded-full bg-[#333] border-2 border-[#888] text-[15px] leading-5 text-center">1</span></button>
    <div class="ml-[31px] mr-[6px] w-px h-[60px] bg-[#777]"></div>
  </div>
</footer>
</body>
</html>
